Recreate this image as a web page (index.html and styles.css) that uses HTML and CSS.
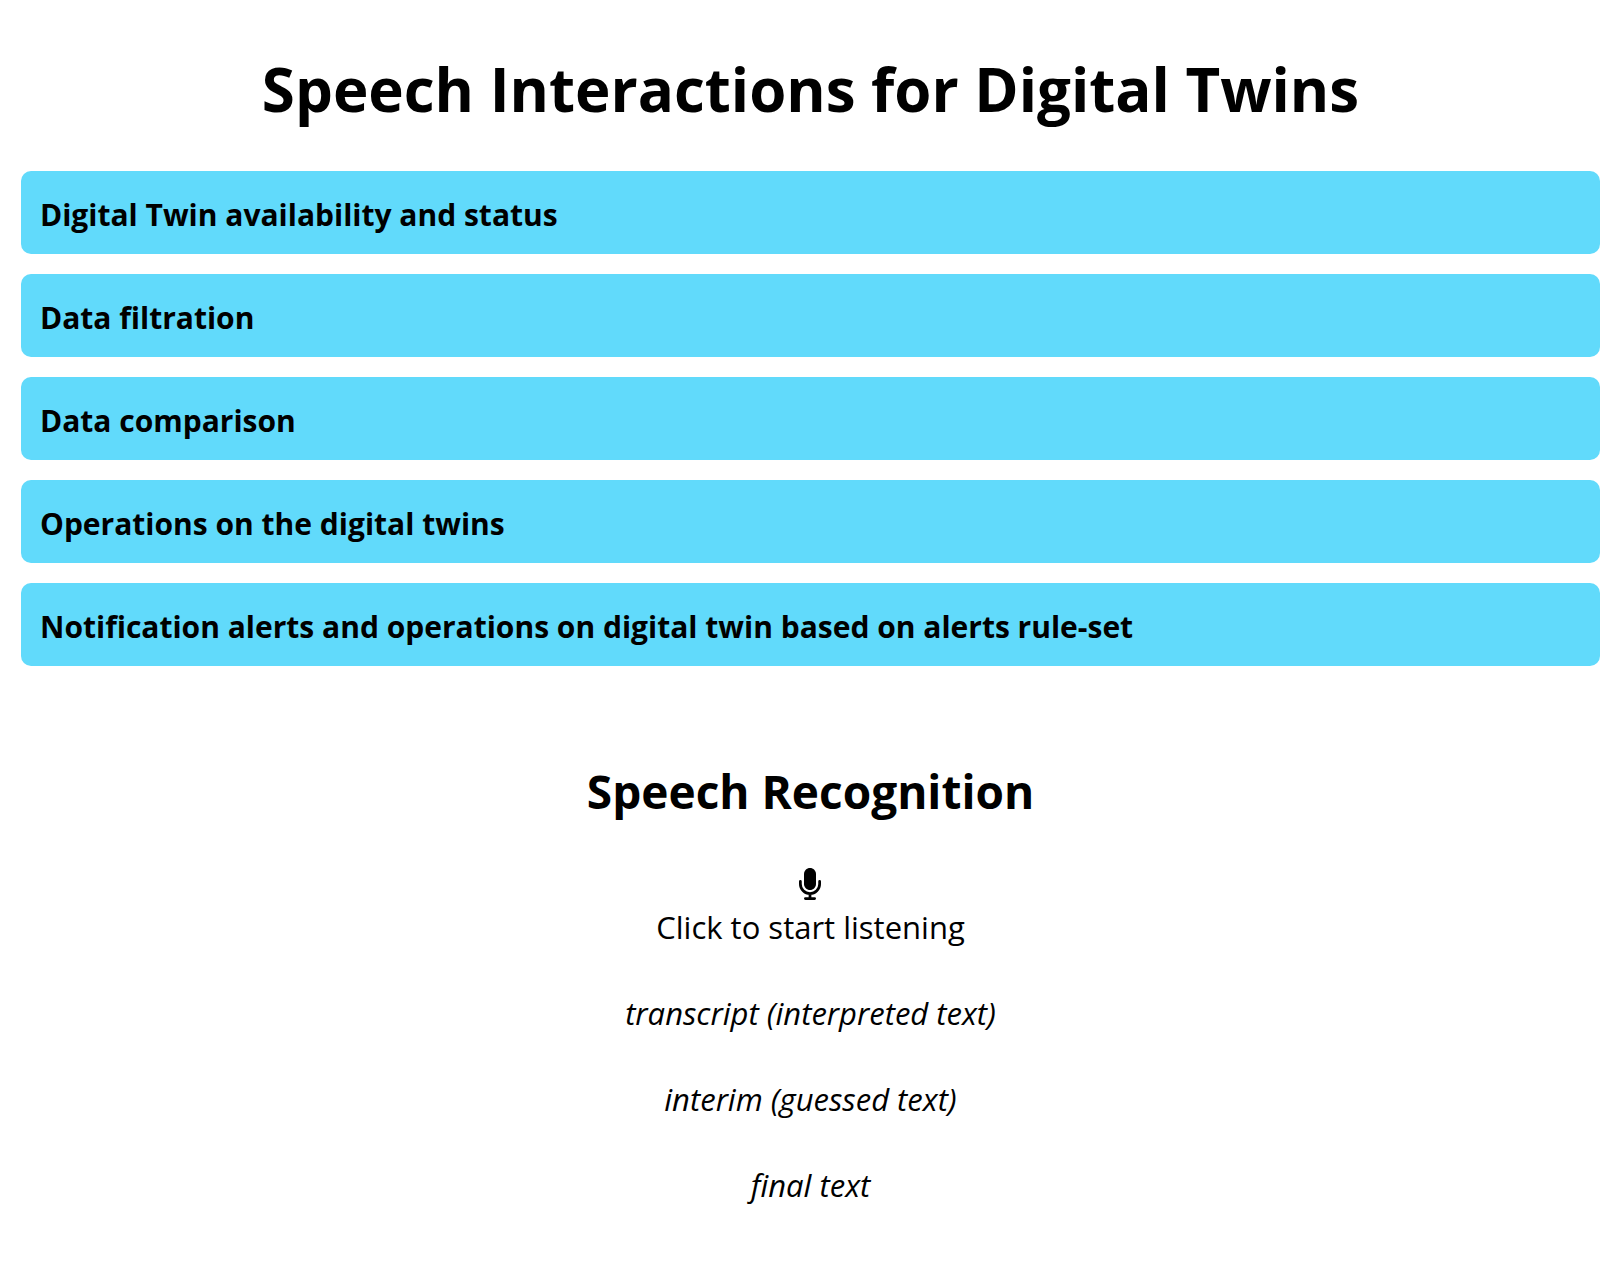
FILE: index.html
```html
<!DOCTYPE html>
<html lang="en">
<head>
  <meta charset="utf-8">
  <meta name="viewport" content="width=device-width, initial-scale=1">
  <title>Speech Interactions for Digital Twins</title>
  <link rel="stylesheet" href="styles.css">
</head>
<body>
  <main class="page">
    <h1 class="page-title">Speech Interactions for Digital Twins</h1>

    <section class="topics">
      <h3 class="topic"><button class="topic-button" type="button">Digital Twin availability and status</button></h3>
      <h3 class="topic"><button class="topic-button" type="button">Data filtration</button></h3>
      <h3 class="topic"><button class="topic-button" type="button">Data comparison</button></h3>
      <h3 class="topic"><button class="topic-button" type="button">Operations on the digital twins</button></h3>
      <h3 class="topic"><button class="topic-button" type="button">Notification alerts and operations on digital twin based on alerts rule-set</button></h3>
    </section>

    <section class="recognition">
      <h2 class="recognition-title">Speech Recognition</h2>
      <button class="listen" type="button">
        <svg class="mic" viewBox="0 0 352 512" aria-hidden="true">
          <path fill="currentColor" d="M176 352c53.02 0 96-42.98 96-96V96c0-53.02-42.98-96-96-96S80 42.98 80 96v160c0 53.02 42.98 96 96 96z"/>
          <path fill="none" stroke="currentColor" stroke-width="44" stroke-linecap="round" d="M22 214v42c0 85 69 154 154 154s154-69 154-154v-42M176 410v76M102 488h148"/>
        </svg>
        <span>Click to start listening</span>
      </button>
      <p class="result">transcript (interpreted text)</p>
      <p class="result">interim (guessed text)</p>
      <p class="result">final text</p>
    </section>
  </main>
</body>
</html>
```
FILE: styles.css
```css
* {
  box-sizing: border-box;
}

body {
  margin: 0;
  background: #fff;
  color: #000;
  font-family: "Segoe UI", "Open Sans", "Noto Sans", sans-serif;
  font-size: 31px;
  line-height: 43px;
}

h1, h2, h3, p {
  margin: 0;
}

h1, h2, h3 {
  font-weight: 700;
}

button {
  border: 0;
  background: none;
  color: inherit;
  font: inherit;
  cursor: pointer;
}

.page {
  display: flex;
  flex-direction: column;
  padding: 46px 18px 40px 21px;
}

.page-title {
  font-size: 60px;
  line-height: 86px;
  text-align: center;
}

.topics {
  display: flex;
  flex-direction: column;
  gap: 20px;
  margin-top: 39px;
}

.topic {
  font-size: 30px;
}

.topic-button {
  display: block;
  width: 100%;
  padding: 22px 19px 18px;
  border-radius: 10px;
  background: #61dafb;
  text-align: left;
}

.recognition {
  display: flex;
  flex-direction: column;
  align-items: center;
  gap: 43px;
  margin-top: 92px;
}

.recognition-title {
  font-size: 46px;
  line-height: 67px;
}

.listen {
  display: flex;
  flex-direction: column;
  align-items: center;
  gap: 6px;
  padding: 0;
}

.mic {
  width: 22px;
  height: 32px;
}

.result {
  font-style: italic;
}
```
